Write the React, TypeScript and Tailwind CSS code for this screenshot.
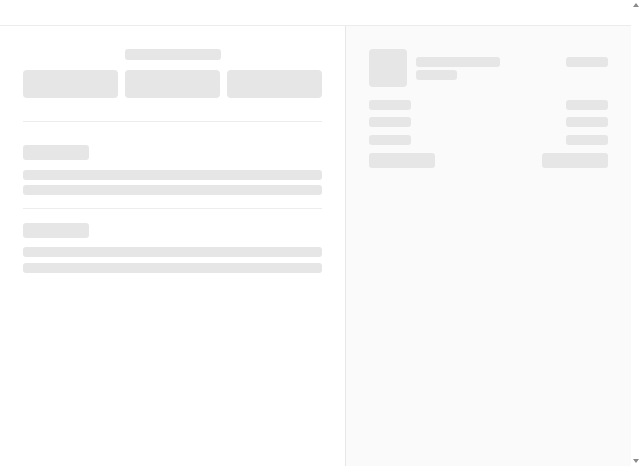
import React from "react";

const Bar = ({ className }: { className: string }) => (
  <div className={`bg-[#e6e6e6] rounded-[3px] ${className}`} />
);

export default function App() {
  return (
    <div className="flex h-[466px] overflow-hidden bg-white font-['Liberation_Sans',sans-serif]">
      <div className="flex-1 flex flex-col">
        <div className="h-[26px] shrink-0 border-b border-[#ececec] bg-white" />
        <div className="flex flex-1">
          <div className="w-[345px] shrink-0 px-[23px] pt-[23px] bg-white">
            <div className="flex justify-center">
              <Bar className="w-[96px] h-[11px]" />
            </div>
            <div className="mt-[10px] grid grid-cols-3 gap-[7px]">
              <Bar className="h-[28px] rounded-[4px]" />
              <Bar className="h-[28px] rounded-[4px]" />
              <Bar className="h-[28px] rounded-[4px]" />
            </div>
            <div className="mt-[23px] border-t border-[#ececec]" />
            <div className="mt-[23px]">
              <Bar className="w-[66px] h-[15px]" />
              <Bar className="mt-[10px] h-[10px]" />
              <Bar className="mt-[5px] h-[10px]" />
            </div>
            <div className="mt-[13px] border-t border-[#ececec]" />
            <div className="mt-[14px]">
              <Bar className="w-[66px] h-[15px]" />
              <Bar className="mt-[9px] h-[10px]" />
              <Bar className="mt-[6px] h-[10px]" />
            </div>
          </div>
          <div className="flex-1 border-l border-[#e6e6e6] bg-[#fafafa] px-[23px] pt-[23px]">
            <div className="flex items-start">
              <Bar className="w-[38px] h-[38px] rounded-[4px]" />
              <div className="ml-[9px] mt-[8px] flex flex-col gap-[3px]">
                <Bar className="w-[84px] h-[10px]" />
                <Bar className="w-[41px] h-[10px]" />
              </div>
              <div className="flex-1" />
              <Bar className="mt-[8px] w-[42px] h-[10px]" />
            </div>
            <div className="mt-[13px] flex flex-col">
              <div className="flex justify-between">
                <Bar className="w-[42px] h-[10px]" />
                <Bar className="w-[42px] h-[10px]" />
              </div>
              <div className="flex justify-between mt-[7px]">
                <Bar className="w-[42px] h-[10px]" />
                <Bar className="w-[42px] h-[10px]" />
              </div>
              <div className="flex justify-between mt-[8px]">
                <Bar className="w-[42px] h-[10px]" />
                <Bar className="w-[42px] h-[10px]" />
              </div>
              <div className="flex justify-between mt-[8px]">
                <Bar className="w-[66px] h-[15px]" />
                <Bar className="w-[66px] h-[15px]" />
              </div>
            </div>
          </div>
        </div>
      </div>
      <div className="w-[9px] shrink-0 flex flex-col justify-between items-center bg-white py-[3px]">
        <svg width="6" height="4" viewBox="0 0 6 4">
          <path d="M3 0 L6 4 L0 4 Z" fill="#8a8a8a" />
        </svg>
        <svg width="6" height="4" viewBox="0 0 6 4">
          <path d="M0 0 L6 0 L3 4 Z" fill="#8a8a8a" />
        </svg>
      </div>
    </div>
  );
}
